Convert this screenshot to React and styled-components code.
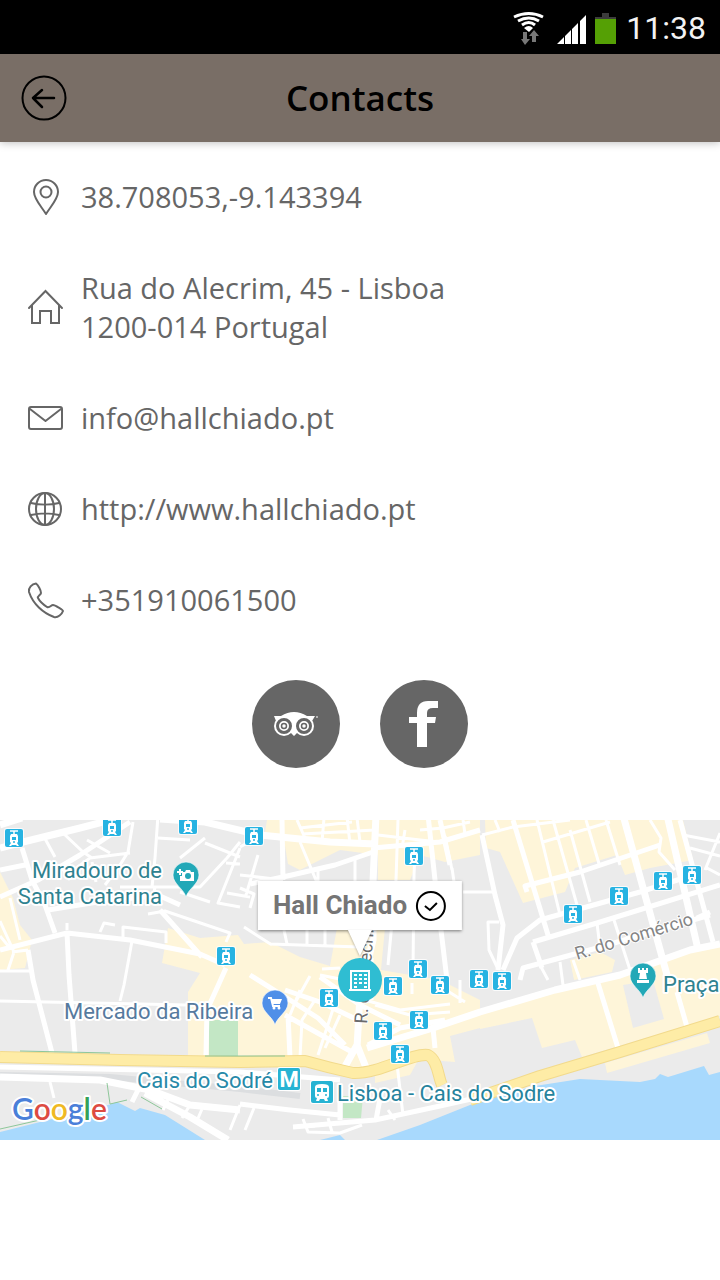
import React from "react";
import styled, { createGlobalStyle } from "styled-components";

const GlobalStyle = createGlobalStyle`
* {
  box-sizing: border-box;
}
body {
  margin: 0;
  background: #fff;
  font-family: "Open Sans", "Noto Sans", sans-serif;
}
`;

const Screen = styled.div`
  width: 100%;
`;

const StatusBar = styled.div`
  height: 54px;
  padding: 0 14px;
  display: flex;
  align-items: center;
  justify-content: flex-end;
  gap: 2px;
  background: #000;
`;

const StatusIcons = styled.svg`
  display: block;
  width: 112px;
  height: 54px;
`;

const Clock = styled.time`
  padding-top: 2px;
  color: #f3f3f3;
  font: 400 32px/54px Roboto, sans-serif;
`;

const Header = styled.header`
  height: 88px;
  padding: 0 20px;
  display: grid;
  grid-template-columns: 48px 1fr 48px;
  align-items: center;
  background: #796e66;
  box-shadow: 0 1px 8px rgba(0, 0, 0, 0.25);
`;

const BackButton = styled.button`
  width: 48px;
  height: 48px;
  padding: 0;
  border: 0;
  background: none;
  cursor: pointer;

  svg {
    display: block;
  }
`;

const Title = styled.h1`
  margin: 0;
  color: #000;
  font-size: 35px;
  font-weight: 600;
  line-height: 48px;
  text-align: center;
`;

const ContactList = styled.ul`
  margin: 0;
  padding: 9px 27px 0;
  list-style: none;
`;

const ContactItem = styled.li`
  display: flex;
  align-items: center;
  gap: 18px;
  padding: 26px 0;
  color: #666;
  font-size: 29px;
  line-height: 39px;
`;

const ContactIcon = styled.svg`
  flex: none;
  width: 36px;
  height: 36px;
  fill: none;
  stroke: #666;
  stroke-width: 2;
  stroke-linejoin: round;
  stroke-linecap: round;
`;

const ContactLink = styled.a`
  color: inherit;
  text-decoration: none;
`;

const Address = styled.address`
  font-style: normal;
`;

const Social = styled.nav`
  display: flex;
  justify-content: center;
  gap: 40px;
  padding: 35px 0 52px;
`;

const SocialLink = styled.a`
  width: 88px;
  height: 88px;
  border-radius: 50%;
  background: #666;

  svg {
    display: block;
  }
`;

const MapArea = styled.section`
  position: relative;
  height: 320px;
  overflow: hidden;
  background: #ebebeb;
`;

const MapCanvas = styled.svg`
  display: block;
  width: 100%;
  height: 100%;
`;

const MapText = styled.text`
  font: 400 22px Roboto, sans-serif;
  fill: ${(props) => props.$color || "#2f8290"};
  stroke: #fff;
  stroke-width: 4px;
  stroke-linejoin: round;
  paint-order: stroke;
`;

const StreetText = styled(MapText)`
  font-size: 18px;
  stroke-width: 2px;
`;

const GoogleText = styled(MapText)`
  font: 600 30px Lato, sans-serif;
`;

const MetroText = styled(MapText)`
  font-weight: 700;
  stroke: none;
`;

const Callout = styled.button`
  position: absolute;
  top: 61px;
  left: 50%;
  transform: translateX(-50%);
  height: 49px;
  padding: 0 15px;
  display: flex;
  align-items: center;
  gap: 8px;
  border: 0;
  background: #fff;
  box-shadow: 0 1px 3px rgba(0, 0, 0, 0.5);
  color: #757575;
  font: 700 26px/49px Roboto, sans-serif;
  white-space: nowrap;
  cursor: pointer;

  &::after {
    content: "";
    position: absolute;
    top: 100%;
    left: 50%;
    margin-left: -12px;
    border: 12px solid transparent;
    border-top: 26px solid #fff;
    border-bottom: 0;
    filter: drop-shadow(0 1px 1px rgba(0, 0, 0, 0.3));
  }
`;

const contactIcons = {
  pin: (
    <>
      <path d="M19 35C14 27 7 20 7 13a12 12 0 0 1 24 0c0 7-7 14-12 22Z" />
      <circle cx="19" cy="13" r="5.5" />
    </>
  ),
  home: (
    <path d="M2 19 18.500 2 35 19M5 16v18h8V22h11v12h8V16" strokeLinejoin="miter" />
  ),
  mail: (
    <>
      <rect x="2" y="7" width="33" height="22" rx="2" />
      <path d="m3 9 15.500 12L34 9" />
    </>
  ),
  globe: (
    <>
      <circle cx="18" cy="18" r="16" />
      <path d="M18 2v32M4 12c8 2 20 2 28 0M4 24c8-2 20-2 28 0" />
      <ellipse cx="18" cy="18" rx="9" ry="16" />
    </>
  ),
  phone: (
    <path d="M9 1.500C5 2 1 6 2 10c4 12 14 21 25 25 4 1 8-3 9-6 0-1-8-6-10-6-2 0-3 3-6 2-3-2-7-5-9-9-1-2 3-3 3-5 0-3-3-8-5-9.500Z" />
  ),
};

const contacts = [
  { icon: "pin", text: "38.708053,-9.143394", href: "geo:38.708053,-9.143394" },
  { icon: "home", lines: ["Rua do Alecrim, 45 - Lisboa", "1200-014 Portugal"] },
  { icon: "mail", text: "info@hallchiado.pt", href: "mailto:info@hallchiado.pt" },
  { icon: "globe", text: "http://www.hallchiado.pt", href: "http://www.hallchiado.pt" },
  { icon: "phone", text: "+351910061500", href: "tel:+351910061500" },
];

const districts = [
  "M0 52 13 78 20 105 32 120 25 148 0 150Z",
  "M267 0H480V35L445 42 420 35 410 60H378V35L340 30 300 50 288 44 284 20 265 12Z",
  "M485 0H683L693 40 650 48 625 55 617 35 575 48 565 72 523 83 500 32 486 28Z",
  "M168 108 200 118 238 115 244 124 270 122 300 137 330 146 337 108H385L381 150 440 160 480 180V208L450 216 455 242 430 240 425 232 350 254 300 240H188V172L200 153 162 143Z",
  "M480 190 620 155 680 134 720 126V196L582 237 575 220 542 228 532 198 480 209Z",
  "M570 140 600 132 615 140 612 152 574 160Z",
  "M605 243 707 213 710 223 607 253Z",
  "M375 248 420 237 410 255 375 263Z",
];

// streets grouped by how wide they are drawn
const streets = [
  {
    width: 3,
    d: `M43 15 55 37M63 13 83 32 92 38M87 20 110 33M0 101 14 132M0 116 10 128M10 78 20 120M28 130 12 132M14 132 8 150
    M0 151H30M158-5 155 38 152 67M158 18 190 20M180 38 205 18M205 23 240 37M240 22 227 38 200 67 120 67
    M240 28 218 83 240 87M240 44 226 43M180 72 210 82M227 73 250 77M75 49 90 38 130 33M133 2 128 32 120 45 105 65
    M148 94 165 91 230 113 226 122M123 118V107L166 112V123M100 112 104 103 115 105M67 110V103
    M132 121 124 165 120 181M0 181 187 185M50 262 54 278
    M60 45 70 60 M92 42 96 62M155 67 153 78M240 55 283 60M240 68 254 74 250 88M258 35 246 75M262 15 240 27M300 22 318 65M318 50V65
    M355 40V65M297 0 305 18M324-2 322 22M347-3 350 24M357-2 360 22M300 8 352 2M302 14 375 10M378 15 420 20 440 22
    M398 0 396 60 388 145M405 10 402 28M420 10 443 8 470 2M463 72H495M415 32 414 55 413 150M445 16 452 50M463 0 465 14M452 48 461 110
    M244 107 272 125M270 124 360 127M307 110V126M284 110 287 124M325 110V126M340 148 322 149M372 138V180
    M537 0 560 95M553 0 577 85M570 10 590 82M586 0 600 47M606 0 620 45M543 22 610 2M482 15 513 7 570 0M495 0 500 12
    M650 0 661 18 659 32 675 50M597 103 600 128M613 97 630 150M683 15 720 22M690 28 720 36M720 13 705 50M705 47 720 55
    M498 149 489 130 488 102H499M540 145 548 160M560 142 563 165M573 140 580 160
    M397 244 403 295M303 299 308 312 340 313 362 305M328 298 332 312M388 290 395 300M168 280 163 290M190 285 182 298M202 289 196 303
    M240 285 230 310M245 310 254 288M446 170 465 182M460 160V183M412 163V174M293 307 315 306
    M365 180 400 190 450 184M345 160 320 155M375 185 410 195 450 192M300 170 290 195M315 180 302 200 300 237M335 183 318 235M310 156 295 183M340 195 325 228`,
  },
  {
    width: 5,
    d: `M0 50 25 45M0 77 38 60 80 35 130 2M22 28 32 60 45 85 55 113M48 90 110 80 160 76 180 85M160 90 202 137
    M0 130 67 113 130 120 200 134 225 145M67 113 69 155 75 233M28 130 33 160 52 233M226 148 217 168 207 190 206 235
    M282 0 283 60M373 32 335 45 283 57 250 64M373 28 440 22 480 10M428-5 435 60 447 160M440 0 450 45
    M513 0 548 115M527 72 525 66 580 52 660 25M503 150 517 118 540 100 640 72 693 55M533 122 597 103 720 65M533 122 542 148
    M520 160 523 148 597 128 710 95M482 15 495 75 503 105 498 150M680 0 713 122M710 92 697 98M597 160 618 228M677 172 687 207
    M250 155 290 180 318 198 345 225M285 195 352 232M288 195 290 237M285 170 320 182 358 200M320 157 360 185 400 205
    M368 225 400 208 445 200M433 208 435 228M0 247 240 252 340 260M240 284 290 290 340 295M293 307 375 300 440 286 480 277M132 282 138 270M382 268 376 300M340 265V300`,
  },
  {
    width: 7,
    d: `M0 28 23 22 80 8 118-2M160-1 205 2 260 15 330 22 375 24M376-5 373 62V120L360 175 357 228M357 225 343 250M357 225 367 250
    M623-5 667 155M667-5 697 125M367 228 433 208 480 192 555 170 620 155 690 130 720 124
    M0 257 100 260 150 270 190 285 240 290M145 273 190 297 228 320M0 5 22-2`,
  },
];

const tramStops = [
  [14, 18], [112, 7], [188, 5], [254, 16], [414, 36], [226, 136], [329, 178],
  [393, 166], [418, 149], [440, 165], [479, 159], [502, 161], [419, 200],
  [383, 211], [400, 234], [573, 94], [619, 76], [663, 61], [692, 55],
];

const avenue =
  "M0 237 120 240 240 242 305 241Q330 248 353 253C380 254 410 233 428 235 438 240 438 257 442 265M470 280 540 256 620 232 720 201";

function TramStop({ x, y }) {
  return (
    <g transform={`translate(${x} ${y})`}>
      <rect x="-10" y="-10" width="20" height="20" rx="3" fill="#fff" opacity=".8" />
      <rect x="-9" y="-9" width="18" height="18" rx="2" fill="#27b3e2" />
      <path d="M-4-7H4M0-7V-3" stroke="#fff" strokeWidth="1.500" />
      <path d="M-3-4H3L4-2V4L3 5 5 8H3L2 7H-2L-3 8H-5L-3 5-4 4V-2Z" fill="#fff" />
      <path d="M-2-1H2V2H-2Z" fill="#27b3e2" />
      <circle cy="4" r="1" fill="#27b3e2" />
    </g>
  );
}

function PlacePin({ x, y, color, children }) {
  return (
    <g transform={`translate(${x} ${y})`}>
      <path
        d="M0 22C-2 14-13 9-13 0a13 13 0 0 1 26 0C13 9 2 14 0 22Z"
        fill={color}
        stroke="#fff"
        strokeOpacity=".6"
      />
      {children}
    </g>
  );
}

function CityMap() {
  return (
    <MapCanvas viewBox="0 0 720 320" preserveAspectRatio="xMidYMid slice" role="img" aria-label="Map">
      <rect width="720" height="320" fill="#ebebeb" />
      <path
        d="M0 312 40 302 108 285 117 282 135 291 140 288 165 295 205 320H0ZM320 320 340 315 345 320ZM377 320 420 305 480 281 535 266 580 259 640 262 655 259 660 254 668 257 704 246 709 255 720 252V320Z"
        fill="#a8d9fd"
      />
      {districts.map((d) => (
        <path key={d} d={d} fill="#fef5d9" />
      ))}
      <path d="M623 165 633 208 664 199 653 160Z" fill="#ebebeb" />
      <path d="M209 200H238V236H209ZM343 276H363L361 298H343Z" fill="#c3e7c5" />
      <path d="M0 255 110 257 240 269 300 276" fill="none" stroke="#dcdee0" strokeWidth="6" />
      {streets.map((group) => (
        <path
          key={group.width}
          d={group.d}
          fill="none"
          stroke="#fff"
          strokeWidth={group.width}
          strokeLinejoin="round"
        />
      ))}
      <g fill="none" strokeLinejoin="round">
        <path d={avenue} stroke="#f2da8c" strokeWidth="12" />
        <path d={avenue} stroke="#feeca6" strokeWidth="10" />
        <path
          d="M0 309 40 300M107 263 110 284 127 280M141 277 162 289M20 231 110 233M205 236H285"
          stroke="#8ec79a"
        />
      </g>

      <StreetText x="577" y="140" transform="rotate(-17 577 140)" $color="#858585">
        R. do Comércio
      </StreetText>
      <StreetText x="367" y="204" transform="rotate(-86 367 204)" $color="#6b6b6b">
        R. do Alecrim
      </StreetText>

      {tramStops.map(([x, y]) => (
        <TramStop key={`${x}-${y}`} x={x} y={y} />
      ))}

      <PlacePin x={186} y={55} color="#22a8b7">
        <path d="M-4-3H-1L0-5H4L5-3H8V6H-6V1H-4Z" fill="#fff" />
        <path d="M-6-6V0M-9-3H-3" stroke="#fff" strokeWidth="2" />
        <circle cx="2" cy="1" r="3" fill="#22a8b7" />
      </PlacePin>
      <PlacePin x={275} y={183} color="#4f8fe8">
        <path d="M-7-5H-4L-2 3H5" fill="none" stroke="#fff" strokeWidth="2" />
        <path d="M-4-4H7L5 1H-3Z" fill="#fff" />
        <circle cx="-1" cy="5" r="1.500" fill="#fff" />
        <circle cx="4" cy="5" r="1.500" fill="#fff" />
      </PlacePin>
      <PlacePin x={643} y={156} color="#22a8b7">
        <path d="M-5-8H-3V-6H-1V-8H1V-6H3V-8H5V-3H3L4 3H-4L-3-3H-5ZM-6 4H6V7H-6Z" fill="#fff" />
      </PlacePin>

      <MapText x="162" y="58" textAnchor="end">Miradouro de</MapText>
      <MapText x="162" y="84" textAnchor="end">Santa Catarina</MapText>
      <MapText x="64" y="199" $color="#567a9e">Mercado da Ribeira</MapText>
      <MapText x="137" y="268" $color="#2789a8">Cais do Sodré</MapText>
      <MapText x="337" y="281" $color="#26839d">Lisboa - Cais do Sodre</MapText>
      <MapText x="663" y="172">Praça</MapText>

      <g transform="translate(289 259)">
        <rect x="-12" y="-12" width="24" height="24" rx="3" fill="#fff" />
        <rect x="-11" y="-11" width="22" height="22" rx="2" fill="#27b3d3" />
        <MetroText x="0" y="8" textAnchor="middle" $color="#fff">M</MetroText>
      </g>
      <g transform="translate(322 272)">
        <rect x="-12" y="-12" width="24" height="24" rx="3" fill="#fff" />
        <rect x="-11" y="-11" width="22" height="22" rx="2" fill="#27b3d3" />
        <path d="M-7-5Q-7-8 0-8T7-5V4Q7 6 5 6L6 9H3L2 7H-2L-3 9H-6L-5 6Q-7 6-7 4Z" fill="#fff" />
        <path d="M-5-4H-1V0H-5ZM1-4H5V0H1Z" fill="#27b3d3" />
        <circle cx="-4" cy="3" r="1" fill="#27b3d3" />
        <circle cx="4" cy="3" r="1" fill="#27b3d3" />
      </g>

      <g transform="translate(360 160)">
        <circle r="22" fill="#2fbdd2" />
        <rect x="-9" y="-9" width="18" height="19" fill="none" stroke="#fff" strokeWidth="2" />
        <path
          d="M-6-5H-3M-1-5H2M4-5H7M-6-1H-3M-1-1H2M4-1H7M-6 3H-3M-1 3H2M4 3H7M-6 7H-3M4 7H7M-11 10H11"
          stroke="#fff"
          strokeWidth="2"
        />
      </g>

      <GoogleText x="12" y="300">
        <tspan fill="#4a7fd9">G</tspan>
        <tspan fill="#dd4b42">o</tspan>
        <tspan fill="#efb923">o</tspan>
        <tspan fill="#4a7fd9">g</tspan>
        <tspan fill="#36a156">l</tspan>
        <tspan fill="#dd4b42">e</tspan>
      </GoogleText>
    </MapCanvas>
  );
}

const App = () => {
  return (
    <Screen>
      <GlobalStyle />
      <StatusBar>
        <StatusIcons viewBox="0 0 112 54" aria-hidden="true">
          {/* wifi */}
          <g fill="none" stroke="#fff" strokeWidth="3">
            <path d="M2 17Q17 10 31 17" />
            <path d="M6 21Q17 15 27 21" />
            <path d="M10 25Q17 20 23 25" />
          </g>
          <path d="M12 28Q17 24 21 28L17 32Z" fill="#fff" />
          <path d="M11 32H15V39H18L13 45 9 39H11ZM20 42V36H17L22 30 27 36H24V42Z" fill="#777" />
          {/* signal */}
          <path d="M45 44 52 37V44ZM53 44V36L59 30V44ZM60 44V29L66 23V44ZM68 44V21L74 15V44Z" fill="#fff" />
          {/* battery */}
          <path d="M90 13H97V17H104V20H83V17H90Z" fill="#3c3c3c" />
          <path d="M83 19H104V44H83Z" fill="#55a005" />
        </StatusIcons>
        <Clock>11:38</Clock>
      </StatusBar>

      <Header>
        <BackButton type="button" aria-label="Back">
          <svg width="48" height="48" viewBox="0 0 48 48" fill="none" stroke="#000" strokeLinecap="round" strokeLinejoin="round">
            <circle cx="24" cy="24" r="21.500" strokeWidth="2" />
            <path d="M34 24H13M22 16 13 24 22 33" strokeWidth="2.500" />
          </svg>
        </BackButton>
        <Title>Contacts</Title>
      </Header>

      <ContactList>
        {contacts.map((contact) => (
          <ContactItem key={contact.icon}>
            <ContactIcon viewBox="0 0 36 36" overflow="visible" aria-hidden="true">
              {contactIcons[contact.icon]}
            </ContactIcon>
            {contact.href ? (
              <ContactLink href={contact.href}>{contact.text}</ContactLink>
            ) : (
              <Address>
                {contact.lines[0]}
                <br />
                {contact.lines[1]}
              </Address>
            )}
          </ContactItem>
        ))}
      </ContactList>

      <Social>
        <SocialLink href="#tripadvisor" aria-label="TripAdvisor">
          <svg width="88" height="88" viewBox="0 0 88 88">
            <path d="M22 36H29Q42 28 55 36H63L60 41 52 50 45 53 42 56 39 53 32 50 24 41Z" fill="#fff" />
            <circle cx="32" cy="46" r="10" fill="#fff" />
            <circle cx="52" cy="46" r="10" fill="#fff" />
            <g fill="none" stroke="#666">
              <circle cx="32" cy="46" r="6.500" strokeWidth="3" />
              <circle cx="52" cy="46" r="6.500" strokeWidth="3" />
              <circle cx="32" cy="46" r="2.500" strokeWidth="1.500" />
              <circle cx="52" cy="46" r="2.500" strokeWidth="1.500" />
            </g>
            <circle cx="65" cy="37" r="1" fill="#ccc" />
          </svg>
        </SocialLink>
        <SocialLink href="#facebook" aria-label="Facebook">
          <svg width="88" height="88" viewBox="0 0 88 88">
            <path d="M37 67V43H29V37H37V33Q37 21 48 21H58V28H53Q47 28 47 33V37H56L55 43H47V67Z" fill="#fff" />
          </svg>
        </SocialLink>
      </Social>

      <MapArea>
        <CityMap />
        <Callout type="button">
          Hall Chiado
          <svg width="32" height="32" viewBox="0 0 32 32" fill="none" stroke="#000" strokeWidth="2" aria-hidden="true">
            <circle cx="16" cy="16" r="14" />
            <path d="m10 16 5 4 7-7" />
          </svg>
        </Callout>
      </MapArea>
    </Screen>
  );
};

export default App;
